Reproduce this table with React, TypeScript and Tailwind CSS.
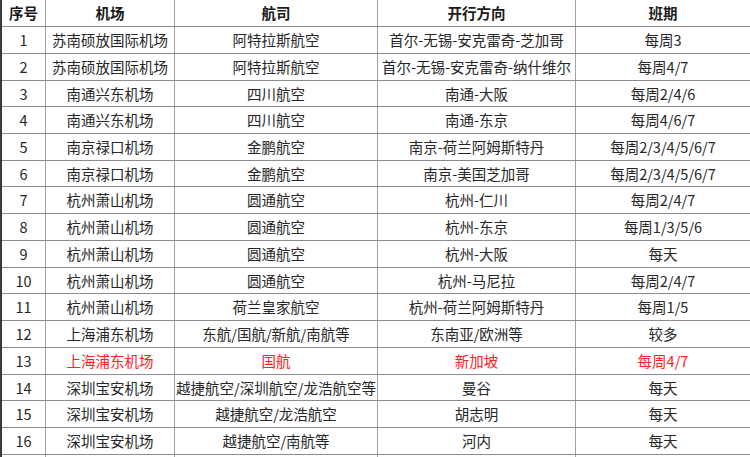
import React from "react";

type Row = {
  no: number;
  airport: string;
  airline: string;
  route: string;
  schedule: string;
  h: string;
  red?: boolean;
};

const rows: Row[] = [
  { no: 1, airport: "苏南硕放国际机场", airline: "阿特拉斯航空", route: "首尔-无锡-安克雷奇-芝加哥", schedule: "每周3", h: "h-[27px]" },
  { no: 2, airport: "苏南硕放国际机场", airline: "阿特拉斯航空", route: "首尔-无锡-安克雷奇-纳什维尔", schedule: "每周4/7", h: "h-[27px]" },
  { no: 3, airport: "南通兴东机场", airline: "四川航空", route: "南通-大阪", schedule: "每周2/4/6", h: "h-[26px]" },
  { no: 4, airport: "南通兴东机场", airline: "四川航空", route: "南通-东京", schedule: "每周4/6/7", h: "h-[27px]" },
  { no: 5, airport: "南京禄口机场", airline: "金鹏航空", route: "南京-荷兰阿姆斯特丹", schedule: "每周2/3/4/5/6/7", h: "h-[27px]" },
  { no: 6, airport: "南京禄口机场", airline: "金鹏航空", route: "南京-美国芝加哥", schedule: "每周2/3/4/5/6/7", h: "h-[26px]" },
  { no: 7, airport: "杭州萧山机场", airline: "圆通航空", route: "杭州-仁川", schedule: "每周2/4/7", h: "h-[27px]" },
  { no: 8, airport: "杭州萧山机场", airline: "圆通航空", route: "杭州-东京", schedule: "每周1/3/5/6", h: "h-[27px]" },
  { no: 9, airport: "杭州萧山机场", airline: "圆通航空", route: "杭州-大阪", schedule: "每天", h: "h-[27px]" },
  { no: 10, airport: "杭州萧山机场", airline: "圆通航空", route: "杭州-马尼拉", schedule: "每周2/4/7", h: "h-[26px]" },
  { no: 11, airport: "杭州萧山机场", airline: "荷兰皇家航空", route: "杭州-荷兰阿姆斯特丹", schedule: "每周1/5", h: "h-[27px]" },
  { no: 12, airport: "上海浦东机场", airline: "东航/国航/新航/南航等", route: "东南亚/欧洲等", schedule: "较多", h: "h-[27px]" },
  { no: 13, airport: "上海浦东机场", airline: "国航", route: "新加坡", schedule: "每周4/7", h: "h-[27px]", red: true },
  { no: 14, airport: "深圳宝安机场", airline: "越捷航空/深圳航空/龙浩航空等", route: "曼谷", schedule: "每天", h: "h-[26px]" },
  { no: 15, airport: "深圳宝安机场", airline: "越捷航空/龙浩航空", route: "胡志明", schedule: "每天", h: "h-[27px]" },
  { no: 16, airport: "深圳宝安机场", airline: "越捷航空/南航等", route: "河内", schedule: "每天", h: "h-[27px]" },
];

const Cell: React.FC<{ w: string; last?: boolean; children?: React.ReactNode }> = ({ w, last, children }) => (
  <div
    className={`${w} shrink-0 flex items-center justify-center whitespace-nowrap ${
      last ? "" : "border-r border-[#a3a3a3]"
    }`}
  >
    {children}
  </div>
);

export default function App() {
  return (
    <div
      className="w-[750px] h-[457px] overflow-hidden bg-white text-[14.5px] text-[#262626]"
      style={{ fontFamily: '"Noto Sans CJK SC", "Noto Sans", sans-serif' }}
    >
      <div className="border-l-2 border-[#3a3a3a] w-[750px]">
        <div className="flex h-[27px] border-b border-[#8c8c8c] font-bold text-[#1a1a1a]">
          <Cell w="w-[44px]">序号</Cell>
          <Cell w="w-[129px]">机场</Cell>
          <Cell w="w-[203px]">航司</Cell>
          <Cell w="w-[198px]">开行方向</Cell>
          <Cell w="w-[174px]" last>班期</Cell>
        </div>
        {rows.map((r) => (
          <div
            key={r.no}
            className={`flex ${r.h} border-b border-[#8c8c8c] ${r.red ? "text-[#ff2020]" : ""}`}
          >
            <Cell w="w-[44px]">
              <span className="text-[#262626]">{r.no}</span>
            </Cell>
            <Cell w="w-[129px]">{r.airport}</Cell>
            <Cell w="w-[203px]">{r.airline}</Cell>
            <Cell w="w-[198px]">{r.route}</Cell>
            <Cell w="w-[174px]" last>{r.schedule}</Cell>
          </div>
        ))}
        <div className="flex h-[10px]">
          <Cell w="w-[44px]" />
          <Cell w="w-[129px]" />
          <Cell w="w-[203px]" />
          <Cell w="w-[198px]" />
          <Cell w="w-[174px]" last />
        </div>
      </div>
    </div>
  );
}
